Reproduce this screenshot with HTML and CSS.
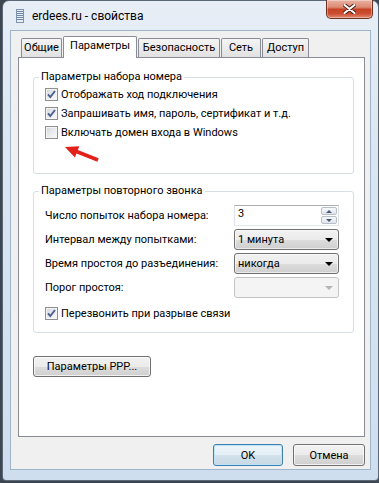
FILE: index.html
```html
<!DOCTYPE html>
<html lang="ru">
<head>
<meta charset="utf-8">
<title>erdees.ru - свойства</title>
<link rel="stylesheet" href="styles.css">
</head>
<body>
<div class="window">
  <div class="titlebar">
    <svg class="app-icon" width="8" height="14" viewBox="0 0 8 14">
      <rect x="0.5" y="0.5" width="7" height="13" fill="#e6eef7" stroke="#7f93ab"/>
      <path d="M1 2.5h6M1 4.5h6M1 6.5h6M1 8.5h6M1 10.5h6" stroke="#6f86a5" stroke-width="1"/>
    </svg>
    <span class="title">erdees.ru - свойства</span>
    <div class="close">
      <svg width="13" height="10" viewBox="0 0 13 10">
        <path d="M1.5 1 L11.5 9 M11.5 1 L1.5 9" stroke="#4a1c12" stroke-width="4" stroke-linecap="round"/>
        <path d="M1.5 1 L11.5 9 M11.5 1 L1.5 9" stroke="#ffffff" stroke-width="2.2" stroke-linecap="round"/>
      </svg>
    </div>
  </div>
  <div class="client">
    <div class="tabs">
      <div class="tab tab-general">Общие</div>
      <div class="tab tab-params active">Параметры</div>
      <div class="tab tab-security">Безопасность</div>
      <div class="tab tab-net">Сеть</div>
      <div class="tab tab-access">Доступ</div>
    </div>
    <div class="panel">
      <fieldset class="group group-dial">
        <legend>Параметры набора номера</legend>
        <div class="check-row"><span class="cb checked"><svg width="11" height="11" viewBox="0 0 11 11"><path d="M2 5.3 L4.3 8 L9 2" fill="none" stroke="#4b5f8e" stroke-width="1.9"/></svg></span><span>Отображать ход подключения</span></div>
        <div class="check-row"><span class="cb checked"><svg width="11" height="11" viewBox="0 0 11 11"><path d="M2 5.3 L4.3 8 L9 2" fill="none" stroke="#4b5f8e" stroke-width="1.9"/></svg></span><span>Запрашивать имя, пароль, сертификат и т.д.</span></div>
        <div class="check-row"><span class="cb"></span><span>Включать домен входа в Windows</span></div>
      </fieldset>
      <fieldset class="group group-redial">
        <legend>Параметры повторного звонка</legend>
        <div class="form-grid">
          <span class="lbl">Число попыток набора номера:</span>
          <div class="spin">
            <span class="val">3</span>
            <div class="spin-btns">
              <span class="sb"><span class="tri-up"></span></span>
              <span class="sb"><span class="tri-down"></span></span>
            </div>
          </div>
          <span class="lbl">Интервал между попытками:</span>
          <div class="combo"><span>1 минута</span><span class="arrow-down"></span></div>
          <span class="lbl">Время простоя до разъединения:</span>
          <div class="combo"><span>никогда</span><span class="arrow-down"></span></div>
          <span class="lbl">Порог простоя:</span>
          <div class="combo disabled"><span></span><span class="arrow-down"></span></div>
        </div>
        <div class="check-row check-redial"><span class="cb checked"><svg width="11" height="11" viewBox="0 0 11 11"><path d="M2 5.3 L4.3 8 L9 2" fill="none" stroke="#4b5f8e" stroke-width="1.9"/></svg></span><span>Перезвонить при разрыве связи</span></div>
      </fieldset>
      <button class="btn btn-ppp">Параметры PPP...</button>
      <svg class="red-arrow" width="38" height="22" viewBox="0 0 38 22">
        <polygon points="2,6 16.3,5.2 11.9,16.4" fill="#e3211b"/>
        <line x1="13.5" y1="10.5" x2="35" y2="19" stroke="#e3211b" stroke-width="3.6"/>
      </svg>
    </div>
    <div class="buttons">
      <button class="btn btn-ok">OK</button>
      <button class="btn btn-cancel">Отмена</button>
    </div>
  </div>
</div>
</body>
</html>
```
FILE: styles.css
```css
html, body {
  margin: 0;
  padding: 0;
}
body {
  width: 379px;
  height: 483px;
  overflow: hidden;
  background: #3d4752;
  font-family: Roboto, "Liberation Sans", sans-serif;
  font-size: 11px;
  color: #000;
}
.window {
  box-sizing: border-box;
  width: 377px;
  height: 481px;
  margin-left: 2px;
  border: 1px solid #5b6878;
  border-radius: 7px 7px 4px 4px;
  background: linear-gradient(180deg, #e7eef6 0%, #dbe6f2 30%, #cfdeee 100%);
  padding: 0 7px 10px 7px;
  display: flex;
  flex-direction: column;
}
.titlebar {
  height: 29px;
  display: flex;
  align-items: flex-start;
  padding-left: 6px;
  flex-shrink: 0;
}
.app-icon {
  margin-top: 8px;
  flex-shrink: 0;
}
.title {
  margin-left: 8px;
  margin-top: 7px;
  line-height: 16px;
  font-size: 12px;
}
.close {
  margin-left: auto;
  margin-right: -2px;
  margin-top: -1px;
  width: 47px;
  height: 19px;
  box-sizing: border-box;
  border: 1px solid #6e3224;
  border-top: none;
  border-radius: 0 0 5px 5px;
  background: linear-gradient(180deg, #eab3a4 0%, #dd8a73 40%, #c64426 52%, #cc4d2f 75%, #e08a6f 100%);
  box-shadow: inset 0 0 0 1px rgba(255,255,255,0.35);
  display: flex;
  align-items: center;
  justify-content: center;
}
.client {
  flex: 1;
  box-sizing: border-box;
  border: 1px solid #9fb3c9;
  background: #f0f0f0;
  padding: 5px 5px 0 7px;
  display: flex;
  flex-direction: column;
}
.tabs {
  display: flex;
  align-items: flex-end;
  gap: 1px;
  height: 22px;
  margin-bottom: -1px;
  padding-left: 3px;
}
.tab {
  box-sizing: border-box;
  height: 19px;
  margin-bottom: 1px;
  border: 1px solid #898c95;
  border-bottom: none;
  border-radius: 2px 2px 0 0;
  background: linear-gradient(180deg, #f4f4f4 0%, #ebebeb 50%, #e1e1e1 100%);
  text-align: center;
  line-height: 18px;
}
.tab.active {
  height: 22px;
  margin-bottom: 0;
  background: #ffffff;
  position: relative;
  z-index: 1;
  line-height: 17px;
}
.tab-general { width: 41px; }
.tab-params { width: 74px; }
.tab-security { width: 82px; }
.tab-net { width: 40px; }
.tab-access { width: 47px; }
.panel {
  position: relative;
  box-sizing: border-box;
  height: 380px;
  border: 1px solid #898c95;
  background: #ffffff;
  padding: 11px 10px 0 14px;
}
.group {
  margin: 0;
  padding: 0 14px 0 11px;
  border: 1px solid #d5dfe5;
  border-radius: 3px;
  min-width: 0;
}
.group legend {
  padding: 0 2px;
  margin-left: -6px;
  line-height: 16px;
}
.group-dial {
  padding-bottom: 31px;
}
.group-redial {
  margin-top: 9px;
  padding-top: 6px;
  padding-bottom: 7px;
}
.check-row {
  display: flex;
  align-items: center;
  gap: 3px;
  height: 19px;
  white-space: nowrap;
}
.check-redial {
  height: 24px;
  margin-top: 3px;
}
.cb {
  box-sizing: border-box;
  width: 13px;
  height: 13px;
  flex-shrink: 0;
  border: 1px solid #8e8f8f;
  background: linear-gradient(135deg, #cfd3d8 0%, #e9ebee 50%, #fafafa 100%);
  box-shadow: inset 0 0 0 1px #f4f4f4;
  display: flex;
  align-items: center;
  justify-content: center;
}
.form-grid {
  display: grid;
  grid-template-columns: 1fr 105px;
  grid-auto-rows: 21px;
  row-gap: 3px;
  align-items: center;
}
.lbl {
  white-space: nowrap;
}
.spin {
  box-sizing: border-box;
  height: 21px;
  border: 1px solid;
  border-color: #abadb3 #dbdfe6 #e3e9ef #e2e3ea;
  background: #fff;
  display: flex;
  align-items: flex-start;
  justify-content: space-between;
}
.spin .val {
  padding-left: 3px;
  line-height: 16px;
}
.spin-btns {
  display: flex;
  flex-direction: column;
  gap: 1px;
  margin: 1px 1px 0 0;
}
.sb {
  box-sizing: border-box;
  width: 16px;
  height: 8px;
  border: 1px solid #b7bfca;
  border-radius: 2px;
  background: linear-gradient(180deg, #f6f8fa, #dfe5ec);
  display: flex;
  align-items: center;
  justify-content: center;
}
.tri-up {
  width: 0;
  height: 0;
  border-left: 3px solid transparent;
  border-right: 3px solid transparent;
  border-bottom: 3px solid #4b5870;
}
.tri-down {
  width: 0;
  height: 0;
  border-left: 3px solid transparent;
  border-right: 3px solid transparent;
  border-top: 3px solid #4b5870;
}
.combo {
  box-sizing: border-box;
  height: 21px;
  border: 1px solid #707070;
  border-radius: 3px;
  background: linear-gradient(180deg, #f2f2f2 0%, #ebebeb 50%, #dddddd 50%, #cfcfcf 100%);
  box-shadow: inset 0 0 0 1px rgba(255,255,255,0.6);
  display: flex;
  align-items: center;
  justify-content: space-between;
  padding: 0 5px 0 3px;
}
.arrow-down {
  width: 0;
  height: 0;
  border-left: 4px solid transparent;
  border-right: 4px solid transparent;
  border-top: 4px solid #000;
}
.combo.disabled {
  border-color: #c2c4c6;
  background: #f4f4f4;
  box-shadow: none;
}
.combo.disabled .arrow-down {
  border-top-color: #b4b4b4;
}
.btn {
  box-sizing: border-box;
  font-family: inherit;
  font-size: 11px;
  color: #000;
  height: 21px;
  padding: 0;
  border: 1px solid #707070;
  border-radius: 3px;
  background: linear-gradient(180deg, #f2f2f2 0%, #ebebeb 50%, #dddddd 50%, #cfcfcf 100%);
  box-shadow: inset 0 0 0 1px rgba(255,255,255,0.7);
  line-height: 17px;
}
.btn-ppp {
  display: block;
  width: 118px;
  margin-top: 23px;
}
.red-arrow {
  position: absolute;
  left: 44px;
  top: 83px;
}
.buttons {
  display: flex;
  justify-content: flex-end;
  gap: 10px;
  margin-top: 7px;
}
.buttons .btn {
  height: 22px;
}
.btn-ok {
  width: 70px;
  border-color: #3c7fb1;
  box-shadow: inset 0 0 0 1px #bfe3f7;
  background: linear-gradient(180deg, #eef6fb 0%, #e3eef5 50%, #d3e2ec 50%, #c7d9e5 100%);
}
.btn-cancel {
  width: 72px;
}
```
